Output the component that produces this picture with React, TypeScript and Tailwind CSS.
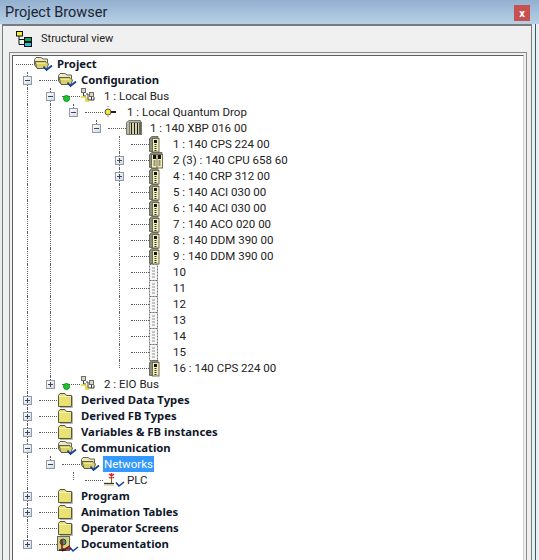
import React from "react";

const FONT = "[font-family:'Roboto','Noto_Sans',sans-serif]";

function Check() {
  return <path d="M10.5 10.5 L13.5 14 L19 9.5" fill="none" stroke="#123f9c" strokeWidth="1.7" />;
}
function FolderOpen() {
  return (
    <svg width="20" height="16" viewBox="0 0 20 16" className="block shrink-0">
      <path d="M1.5 3.5 L3 1.5 H8 L10 3 H14.5 V11 H3 L1.5 9 Z" fill="#efeab8" stroke="#66665a" />
      <path d="M2 5.5 H13 L15.5 8 L14 12.5 H4 Z" fill="#d8d06a" stroke="#5f5f50" />
      <path d="M4 7.5 H12" stroke="#ece79a" />
      <Check />
    </svg>
  );
}
function FolderClosed() {
  return (
    <svg width="20" height="16" viewBox="0 0 20 16" className="block shrink-0">
      <path d="M1.5 3.5 L3 1.5 H8 L9.5 3.5 H14.5 V14.5 H1.5 Z" fill="#e8e272" stroke="#55554a" />
      <path d="M2 4.5 H14" stroke="#f8f5c0" />
      <path d="M15.5 4 V15.5 H3" fill="none" stroke="#b8b8a8" />
    </svg>
  );
}
function Bus() {
  return (
    <svg width="18" height="16" viewBox="0 0 18 16" className="block shrink-0">
      <rect x="1.5" y="0.5" width="4" height="4" fill="#d8d8cc" stroke="#6c6c60" />
      <rect x="9.5" y="4.5" width="4" height="4" fill="#d8d8cc" stroke="#6c6c60" />
      <path d="M3.5 5 V8 H6 M6 6 H8 V12 H14 V9 M11.5 9 V12" fill="none" stroke="#3a3a2c" />
      <path d="M1 9 H5 M6 9 V13 H9" fill="none" stroke="#e6d21a" strokeWidth="1.5" />
    </svg>
  );
}
function Drop() {
  return (
    <svg width="18" height="16" viewBox="0 0 18 16" className="block shrink-0">
      <circle cx="5" cy="8" r="3" fill="#f2e544" stroke="#55553a" />
      <path d="M8 8 H13" stroke="#222" strokeWidth="2" />
      <path d="M5 2 V4 M5 12 V14" stroke="#777" strokeDasharray="1 1" />
    </svg>
  );
}
function Rack() {
  return (
    <svg width="18" height="16" viewBox="0 0 18 16" className="block shrink-0">
      <path d="M0.5 2.5 L3 0.5 H14.5 V14.5 H0.5 Z" fill="#b9b9a6" stroke="#77776a" />
      <rect x="3.5" y="2.5" width="12" height="12" fill="#f4f1c0" stroke="#77776a" />
      <path d="M5.5 3 V14 M8.5 3 V14 M11.5 3 V14 M14 3 V14" stroke="#1d1d1d" strokeWidth="1.3" />
    </svg>
  );
}
function ModuleIcon() {
  return (
    <svg width="11" height="17" viewBox="0 0 11 17" className="block shrink-0">
      <path d="M0.5 2.5 L3 0.5 H9 V15.5 H0.5 Z" fill="#8e8e7e" stroke="#6c6c60" />
      <rect x="3.5" y="2.5" width="6.5" height="13.5" fill="#f4f0b2" stroke="#6c6c5c" />
      <rect x="5" y="4" width="3" height="3" fill="#111" />
      <path d="M5.5 8.5 H7.5 M5.5 10.5 H7.5 M5.5 12.5 H7.5 M5.5 14.5 H7.5" stroke="#333" />
    </svg>
  );
}
function DoubleModule() {
  return (
    <svg width="14" height="17" viewBox="0 0 14 17" className="block shrink-0">
      <path d="M0.5 2.5 L3 0.5 H13 V15.5 H0.5 Z" fill="#8e8e7e" stroke="#6c6c60" />
      <rect x="2.5" y="2.5" width="11" height="13.5" fill="#f4f0b2" stroke="#6c6c5c" />
      <path d="M4 3 H7 V7 H4 Z M9 3 H12 V7 H9 Z" fill="#111" />
      <path d="M4.5 9 H6.5 M4.5 11 H6.5 M4.5 13 H6.5 M9.5 9 H11.5 M9.5 11 H11.5 M9.5 13 H11.5" stroke="#333" />
      <path d="M8 3 V16" stroke="#6c6c5c" />
    </svg>
  );
}
function EmptySlot() {
  return (
    <svg width="11" height="17" viewBox="0 0 11 17" className="block shrink-0">
      <rect x="0.5" y="0.5" width="8" height="16" fill="#f6f6f6" stroke="#707070" strokeDasharray="2 1" />
      <path d="M3 4 H6 M3 7 H6 M3 10 H6 M3 13 H6" stroke="#909090" />
    </svg>
  );
}
function Plc() {
  return (
    <svg width="22" height="16" viewBox="0 0 22 16" className="block shrink-0">
      <path d="M8.5 1 V7 M6 2 L11 6 M11 2 L6 6" stroke="#d8201c" strokeWidth="1.4" />
      <path d="M8.5 7 V11" stroke="#7a6a20" />
      <path d="M1 11.5 H11" stroke="#333" strokeWidth="1.3" />
      <path d="M1 13 H11" stroke="#c9c070" />
      <path d="M13 10.5 L16 14 L21 10" fill="none" stroke="#123f9c" strokeWidth="1.6" />
    </svg>
  );
}
function DocIcon() {
  return (
    <svg width="22" height="17" viewBox="0 0 22 17" className="block shrink-0">
      <rect x="0.5" y="0.5" width="12" height="14" fill="#d9d27c" stroke="#66665a" />
      <circle cx="6" cy="6" r="3" fill="#5b8a78" stroke="#2b4a40" />
      <path d="M5 4 V13 H14 M5 15 L13 10" fill="none" stroke="#8e1a1a" strokeWidth="1.6" />
      <path d="M2 14 H9" stroke="#222" strokeWidth="1.5" />
      <path d="M13 11.5 L16 15 L21 11" fill="none" stroke="#123f9c" strokeWidth="1.6" />
    </svg>
  );
}
function TreeGlyph() {
  return (
    <svg width="18" height="18" viewBox="0 0 18 18" className="block">
      <path d="M4 6 V14.5 H9 M4 9.5 H9" fill="none" stroke="#111" />
      <rect x="1.5" y="1.5" width="6" height="4.5" fill="#f3ee44" stroke="#111" />
      <rect x="9.5" y="7.5" width="7" height="4" fill="#16a36a" stroke="#111" />
      <rect x="9.5" y="12.5" width="7" height="4" fill="#33bcd0" stroke="#111" />
    </svg>
  );
}

function Expander({ open }: { open: boolean }) {
  return (
    <span className="relative z-10 flex h-[9px] w-[9px] items-center justify-center border border-[#8f9aa8] bg-gradient-to-br from-white to-[#d4d8de]">
      <span className="relative block h-px w-[5px] bg-[#39465c]" />
      {!open && <span className="absolute h-[5px] w-px bg-[#39465c]" />}
    </span>
  );
}

type Slot = "line" | "none";
type RowProps = {
  guides?: Slot[];
  exp?: "open" | "closed" | "none";
  last?: boolean;
  icon: React.ReactNode;
  label: string;
  bold?: boolean;
  dot?: boolean;
  selected?: boolean;
  root?: boolean;
};

function Guide({ kind }: { kind: Slot }) {
  return (
    <div className="flex h-4 w-[23px] shrink-0 justify-center">
      {kind === "line" && <div className="h-4 w-0 border-l border-dotted border-[#5e5e5e]" />}
    </div>
  );
}

function Row({ guides = [], exp = "none", last, icon, label, bold, dot, selected, root }: RowProps) {
  return (
    <div className="flex h-4 items-center">
      {guides.map((g, i) => (
        <Guide key={i} kind={g} />
      ))}
      {!root && (
        <div className="relative flex h-4 w-[23px] shrink-0 items-center justify-center">
          <div
            className={`absolute left-[11px] top-0 w-0 border-l border-dotted border-[#5e5e5e] ${last ? "h-2" : "h-4"}`}
          />
          {exp !== "none" && <Expander open={exp === "open"} />}
        </div>
      )}
      <div className={`relative shrink-0 border-t border-dotted border-[#5e5e5e] ${root ? "w-[17px]" : "w-[18px]"}`}>
        {dot && (
          <span className="absolute left-[1px] top-[-2px] block h-[7px] w-[7px] rounded-full border border-[#118a1c] bg-[#19c92c]" />
        )}
      </div>
      <div className="flex h-4 w-[23px] shrink-0 items-center">{icon}</div>
      <span
        className={`h-4 whitespace-nowrap px-px leading-4 ${
          bold
            ? "text-[11.3px] font-bold text-[#10182a] [font-family:'Noto_Sans',sans-serif]"
            : "text-[11.5px] text-[#222]"
        } ${selected ? "bg-[#3399ff] text-white" : ""}`}
      >
        {label}
      </span>
    </div>
  );
}

const mods: [string, "m" | "d" | "e", boolean?][] = [
  ["1 : 140 CPS 224 00", "m"],
  ["2 (3) : 140 CPU 658 60", "d", true],
  ["4 : 140 CRP 312 00", "m", true],
  ["5 : 140 ACI 030 00", "m"],
  ["6 : 140 ACI 030 00", "m"],
  ["7 : 140 ACO 020 00", "m"],
  ["8 : 140 DDM 390 00", "m"],
  ["9 : 140 DDM 390 00", "m"],
  ["10", "e"],
  ["11", "e"],
  ["12", "e"],
  ["13", "e"],
  ["14", "e"],
  ["15", "e"],
  ["16 : 140 CPS 224 00", "m"],
];

export default function App() {
  return (
    <div className={`flex h-[560px] w-[539px] flex-col overflow-hidden bg-[#e9eef0] ${FONT}`}>
      <div className="flex h-6 shrink-0 items-center justify-between bg-gradient-to-b from-[#93b0d0] to-[#b7d0e6] pl-[5px] pr-[9px]">
        <span className="pt-px text-[14.5px] leading-6 text-[#1c2530]">Project Browser</span>
        <span className="mt-[2px] flex h-4 w-4 items-center justify-center bg-[#c75050] text-[11px] font-bold leading-none text-white">
          x
        </span>
      </div>
      <div className="flex min-h-0 flex-1 pl-[2px] pr-[3px]">
        <div className="flex min-w-0 flex-1 flex-col border-l border-t-2 border-r border-[#7b7b7b] bg-[#f0f0f0] pl-[6px] pr-[4px]">
          <div className="flex h-[26px] shrink-0 items-center gap-[8px] pl-[6px]">
            <TreeGlyph />
            <span className="pt-px text-[11px] text-[#222]">Structural view</span>
          </div>
          <div className="min-h-0 flex-1 border-t border-l border-r border-[#8a8a8a] px-[2px] pt-[2px]">
            <div className="h-full border-t border-l border-r border-t-[#5f5f5f] border-l-[#5f5f5f] border-r-[#cfcfcf] bg-white pl-[3px]">
              <Row root icon={<FolderOpen />} label="Project" bold />
              <Row exp="open" icon={<FolderOpen />} label="Configuration" bold />
              <Row guides={["line"]} exp="open" dot icon={<Bus />} label="1 : Local Bus" />
              <Row guides={["line", "line"]} exp="open" last icon={<Drop />} label="1 : Local Quantum Drop" />
              <Row guides={["line", "line", "none"]} exp="open" last icon={<Rack />} label="1 : 140 XBP 016 00" />
              {mods.map(([l, k, plus], i) => (
                <Row
                  key={l}
                  guides={["line", "line", "none", "none"]}
                  exp={plus ? "closed" : "none"}
                  last={i === mods.length - 1}
                  icon={k === "m" ? <ModuleIcon /> : k === "d" ? <DoubleModule /> : <EmptySlot />}
                  label={l}
                />
              ))}
              <Row guides={["line"]} exp="closed" last dot icon={<Bus />} label="2 : EIO Bus" />
              <Row exp="closed" icon={<FolderClosed />} label="Derived Data Types" bold />
              <Row exp="closed" icon={<FolderClosed />} label="Derived FB Types" bold />
              <Row exp="closed" icon={<FolderClosed />} label="Variables & FB instances" bold />
              <Row exp="open" icon={<FolderOpen />} label="Communication" bold />
              <Row guides={["line"]} exp="open" last icon={<FolderOpen />} label="Networks" selected />
              <Row guides={["line", "none"]} last icon={<Plc />} label="PLC" />
              <Row exp="closed" icon={<FolderClosed />} label="Program" bold />
              <Row exp="closed" icon={<FolderClosed />} label="Animation Tables" bold />
              <Row icon={<FolderClosed />} label="Operator Screens" bold />
              <Row exp="closed" last icon={<DocIcon />} label="Documentation" bold />
            </div>
          </div>
        </div>
        <div className="ml-[3px] w-px bg-[#2f5f72]" />
      </div>
    </div>
  );
}
